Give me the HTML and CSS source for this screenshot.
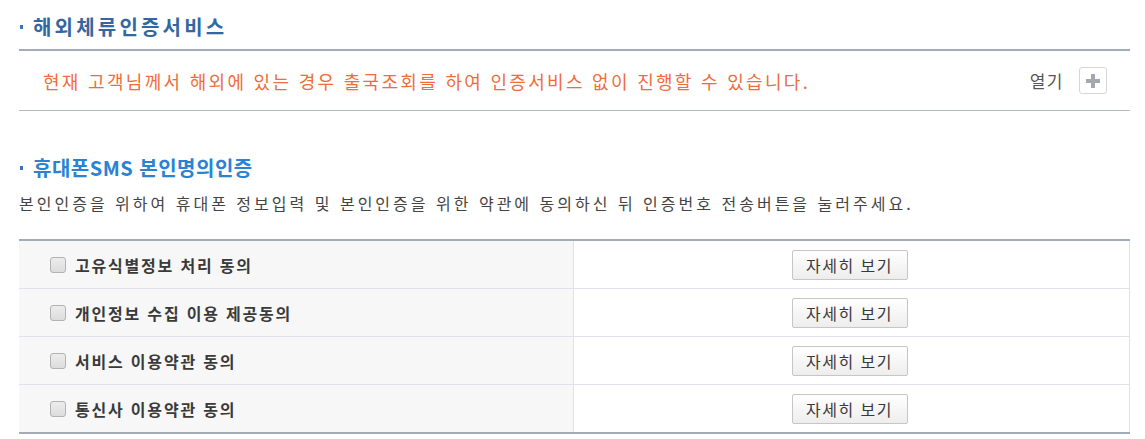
FILE: index.html
```html
<!DOCTYPE html>
<html lang="ko">
<head>
<meta charset="utf-8">
<title>본인인증</title>
<link rel="stylesheet" href="styles.css">
</head>
<body>
<div class="wrap">
  <h2 class="sec-title sec-title-dark">해외체류인증서비스</h2>
  <div class="info-box">
    <p class="info-text">현재 고객님께서 해외에 있는 경우 출국조회를 하여 인증서비스 없이 진행할 수 있습니다.</p>
    <div class="toggle">
      <span class="toggle-label">열기</span>
      <span class="plus-box"><svg width="16" height="16" viewBox="0 0 16 16"><rect x="6" y="1" width="4" height="14" fill="#a3a7ae"/><rect x="1" y="6" width="14" height="4" fill="#a3a7ae"/></svg></span>
    </div>
  </div>

  <h2 class="sec-title sec-title-bright second">휴대폰SMS 본인명의인증</h2>
  <p class="desc">본인인증을 위하여 휴대폰 정보입력 및 본인인증을 위한 약관에 동의하신 뒤 인증번호 전송버튼을 눌러주세요.</p>

  <table class="agree">
    <tr>
      <td class="label-cell"><label><input type="checkbox" class="chk"><span>고유식별정보 처리 동의</span></label></td>
      <td class="btn-cell"><button class="btn">자세히 보기</button></td>
    </tr>
    <tr>
      <td class="label-cell"><label><input type="checkbox" class="chk"><span>개인정보 수집 이용 제공동의</span></label></td>
      <td class="btn-cell"><button class="btn">자세히 보기</button></td>
    </tr>
    <tr>
      <td class="label-cell"><label><input type="checkbox" class="chk"><span>서비스 이용약관 동의</span></label></td>
      <td class="btn-cell"><button class="btn">자세히 보기</button></td>
    </tr>
    <tr>
      <td class="label-cell"><label><input type="checkbox" class="chk"><span>통신사 이용약관 동의</span></label></td>
      <td class="btn-cell"><button class="btn">자세히 보기</button></td>
    </tr>
  </table>
</div>
</body>
</html>
```

FILE: styles.css
```css
html, body {
  margin: 0;
  padding: 0;
  background: #ffffff;
}

body {
  font-family: "Noto Sans CJK KR", "Noto Sans", sans-serif;
  color: #333333;
}

.wrap {
  width: 1111px;
  margin-left: 19px;
}

.sec-title {
  margin: 0;
  font-size: 20px;
  font-weight: bold;
  line-height: 30px;
  letter-spacing: 0.5px;
  display: flex;
  align-items: center;
}

.sec-title::before {
  content: "";
  width: 3px;
  height: 4px;
  margin-left: 1px;
  margin-right: 10px;
  background: #3b74b8;
  flex: none;
}

.sec-title-dark {
  color: #34679f;
  padding-top: 12px;
  padding-bottom: 7px;
  border-bottom: 2px solid #a4abb8;
  letter-spacing: 3.2px;
}

.sec-title-bright {
  color: #2a83d2;
}

.second {
  margin-top: 42px;
}

.info-box {
  height: 59px;
  border-bottom: 1px solid #b3b8c1;
  display: flex;
  align-items: center;
  justify-content: space-between;
  padding: 0 23px 0 24px;
}

.info-text {
  margin: 0;
  font-size: 18px;
  line-height: 22px;
  color: #ef6d3c;
  letter-spacing: 2.3px;
}

.toggle {
  display: flex;
  align-items: center;
  gap: 15px;
}

.toggle-label {
  font-size: 17px;
  color: #555555;
  letter-spacing: 1.5px;
}

.plus-box {
  width: 26px;
  height: 25px;
  border: 1px solid #d4d6da;
  border-radius: 3px;
  display: flex;
  align-items: center;
  justify-content: center;
  background: #ffffff;
}

.desc {
  margin: 9px 0 0;
  font-size: 16px;
  line-height: 22px;
  color: #444444;
  letter-spacing: 3px;
}

.agree {
  margin-top: 25px;
  width: 1111px;
  border-collapse: collapse;
  border-top: 2px solid #a4abb8;
  border-bottom: 2px solid #a4abb8;
}

.agree td {
  height: 47px;
  padding: 0;
  border-bottom: 1px solid #dfe3e9;
}

.label-cell {
  width: 554px;
  background: #f7f7f7;
  border-right: 1px solid #dfe3e9;
}

.btn-cell {
  text-align: center;
  border-right: 1px solid #dfe3e9;
  background: #ffffff;
}

.label-cell label {
  display: flex;
  align-items: center;
  padding-left: 31px;
}

.label-cell span {
  font-size: 16px;
  font-weight: bold;
  color: #3a3a3a;
  letter-spacing: 1.8px;
}

.chk {
  appearance: none;
  -webkit-appearance: none;
  width: 16px;
  height: 16px;
  margin: 0 9px 0 0;
  border: 1px solid #b3b3b3;
  border-radius: 3px;
  background: linear-gradient(#ececec, #dcdcdc);
  flex: none;
}

.btn {
  width: 116px;
  height: 30px;
  margin-left: -4px;
  border: 1px solid #c6c6c6;
  border-radius: 2px;
  background: linear-gradient(#ffffff, #ededed);
  font-family: "Noto Sans CJK KR", "Noto Sans", sans-serif;
  font-size: 16px;
  color: #3a3a3a;
  letter-spacing: 1.5px;
  padding: 0;
}
```
